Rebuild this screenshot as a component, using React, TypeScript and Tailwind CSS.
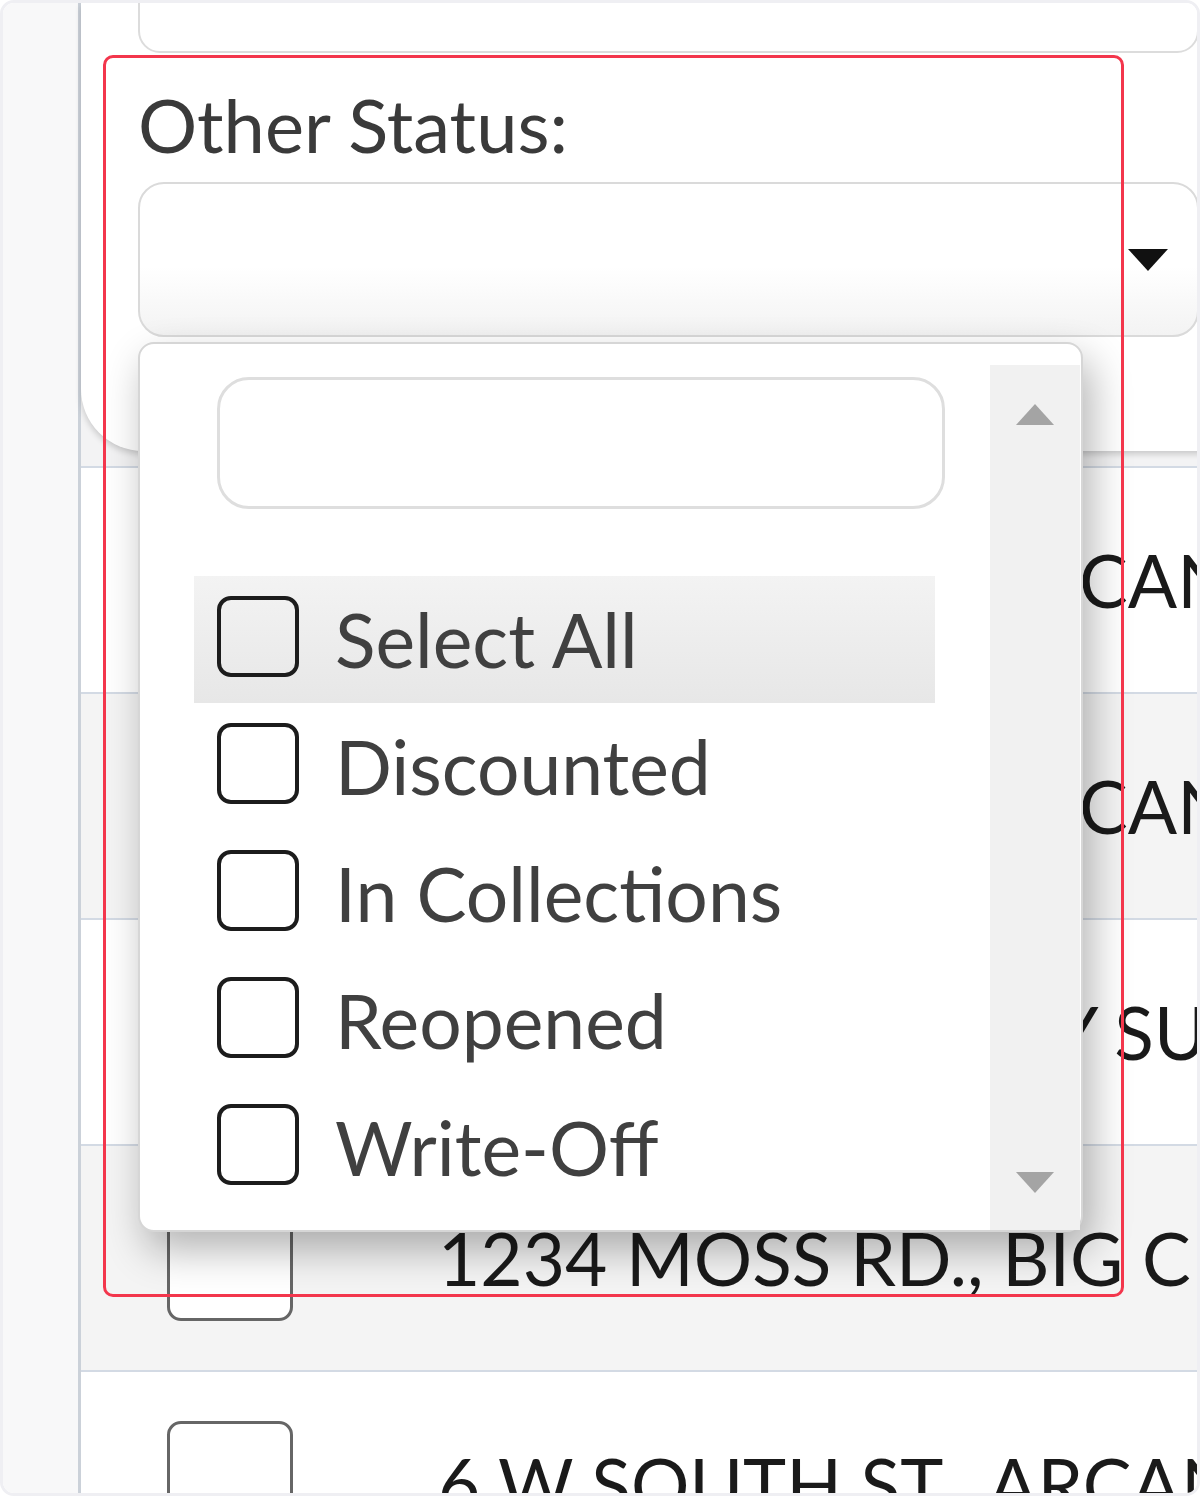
import React from 'react';

const options = ['Select All', 'Discounted', 'In Collections', 'Reopened', 'Write-Off'];

interface Row {
  offset: string;
  text: string;
  striped: boolean;
}

// rows 1-3 sit mostly under the open dropdown, only their tail shows
const rows: Row[] = [
  { offset: 'w-[641px]', text: 'CANUM', striped: false },
  { offset: 'w-[641px]', text: 'CANUM', striped: true },
  { offset: 'w-[615px]', text: 'Y SUMMIT', striped: false },
  { offset: 'w-0', text: '1234 MOSS RD., BIG CREEK', striped: true },
  { offset: 'w-0', text: '6 W SOUTH ST., ARCANUM', striped: false },
];

function Caret({ className }: { className?: string }) {
  return (
    <svg viewBox="0 0 40 22" className={className}>
      <polygon points="0,0 40,0 20,22" fill="currentColor" />
    </svg>
  );
}

function Checkbox({ big }: { big?: boolean }) {
  if (big) {
    return <div className="w-[126px] h-[126px] shrink-0 rounded-[14px] border-[3px] border-[#666] bg-white" />;
  }
  return <div className="w-[82px] h-[81px] shrink-0 -mt-[6px] rounded-[14px] border-[4px] border-[#1c1c1c]" />;
}

export default function App() {
  return (
    <div className="relative w-[1200px] h-[1496px] overflow-hidden rounded-[14px] border-[3px] border-[#efeff3] bg-white font-['Lato',sans-serif]">
      <div className="flex h-full">
        {/* left rail */}
        <div className="w-[75px] shrink-0 bg-[#f8f8f9]" />

        {/* main column */}
        <div className="flex-1 min-w-0 border-l-[3px] border-[#cbd1d9] bg-[#f3f3f4]">
          {/* filter card */}
          <div className="flex flex-col w-[1180px] h-[448px] rounded-bl-[62px] bg-white pl-[57px] shadow-[0_3px_6px_rgba(0,0,0,0.18)]">
            <div className="-mt-[110px] h-[160px] w-[1061px] shrink-0 rounded-[22px] border-2 border-[#dcdcdc] bg-white" />
            <div className="mt-[35px] text-[74px] leading-none text-[#3a3a3a] whitespace-nowrap">Other Status:</div>
            <div className="mt-[20px] flex h-[155px] w-[1061px] shrink-0 items-center justify-end rounded-[26px] border-2 border-[#dadada] bg-linear-to-b from-white from-55% to-[#f3f3f3] pr-[29px]">
              <Caret className="w-[40px] h-[22px] text-[#111] blur-[0.6px]" />
            </div>
          </div>

          {/* table rows */}
          <div className="mt-[15px] border-t-2 border-[#d3dae4]">
            {rows.map((row, i) => (
              <div
                key={i}
                className={`flex h-[226px] items-center border-b-2 border-[#d3dae4] pl-[86px] whitespace-nowrap ${row.striped ? 'bg-[#f4f4f4]' : 'bg-white'}`}
              >
                <Checkbox big />
                <span className={`ml-[145px] shrink-0 ${row.offset}`} />
                <span className="text-[73px] leading-none text-[#1a1a1a]">{row.text}</span>
              </div>
            ))}
          </div>
        </div>
      </div>

      {/* open dropdown */}
      <div className="absolute left-[135px] top-[339px] flex h-[890px] w-[945px] rounded-[16px] border-2 border-[#d6d6d6] bg-white pt-[21px] pr-px shadow-[8px_18px_40px_rgba(0,0,0,0.3)]">
        <div className="flex-1 pl-[54px] pt-[12px]">
          <div className="ml-[23px] h-[132px] w-[728px] rounded-[32px] border-[3px] border-[#dedede] bg-white" />
          <div className="mt-[67px] w-[741px]">
            {options.map((label, i) => (
              <div
                key={label}
                className={`flex h-[127px] items-center px-[23px] ${i === 0 ? 'bg-linear-to-b from-[#f3f3f3] to-[#e7e7e7]' : ''}`}
              >
                <Checkbox />
                <span className="ml-[36px] text-[75px] leading-none text-[#404040] whitespace-nowrap">{label}</span>
              </div>
            ))}
          </div>
        </div>
        <div className="flex w-[90px] flex-col items-center justify-between bg-[#f1f1f1] pt-[39px] pb-[37px]">
          <Caret className="w-[38px] h-[21px] rotate-180 text-[#a4a4a4]" />
          <Caret className="w-[38px] h-[21px] text-[#a4a4a4]" />
        </div>
      </div>

      {/* highlight annotation */}
      <div className="absolute left-[100px] top-[52px] h-[1242px] w-[1021px] rounded-[10px] border-[3px] border-[#f3364c]" />
    </div>
  );
}
